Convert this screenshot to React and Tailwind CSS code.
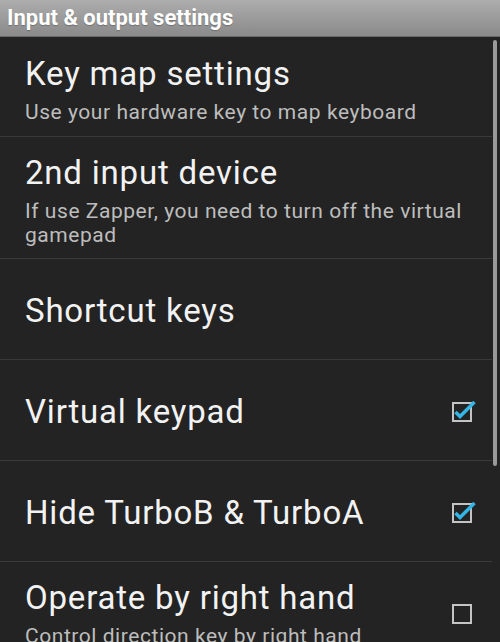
const items = [
  { title: 'Key map settings', summary: 'Use your hardware key to map keyboard', pt: 'pt-[18px]', pb: 'pb-[12px]' },
  { title: '2nd input device', summary: 'If use Zapper, you need to turn off the virtual gamepad', pt: 'pt-[17px]', pb: 'pb-[11px]' },
  { title: 'Shortcut keys', pt: 'pt-[33px]', pb: 'pb-[29px]' },
  { title: 'Virtual keypad', checked: true, pt: 'pt-[33px]', pb: 'pb-[29px]' },
  { title: 'Hide TurboB & TurboA', checked: true, pt: 'pt-[33px]', pb: 'pb-[29px]' },
  { title: 'Operate by right hand', summary: 'Control direction key by right hand', checked: false, pt: 'pt-[17px]', pb: 'pb-[12px]' },
];

function CheckBox({ checked }) {
  return (
    <svg width="28" height="28" viewBox="0 0 28 28" className="shrink-0">
      <rect x="3" y="5" width="18" height="18" fill="none" stroke="#c4c4c4" strokeWidth="2" />
      {checked && (
        <path d="M5.5 14 L10 18.5 L24.5 4" fill="none" stroke="#33b5e5" strokeWidth="3.5" strokeLinejoin="miter" />
      )}
    </svg>
  );
}

function Row({ item }) {
  return (
    <div className={`flex items-center pl-[25px] pr-[14px] border-b border-[#3a3a3a] ${item.pt} ${item.pb}`}>
      <div className="flex-1 min-w-0">
        <div className="text-[33px] leading-[38px] tracking-[0.8px] text-[#f2f2f2] whitespace-nowrap">{item.title}</div>
        {item.summary && (
          <div className="mt-[7px] text-[21px] leading-[24px] tracking-[0.55px] text-[#bdbdbd] pr-[4px]">{item.summary}</div>
        )}
      </div>
      {item.checked !== undefined && <CheckBox checked={item.checked} />}
    </div>
  );
}

export default function App() {
  return (
    <div className="w-[500px] h-[642px] overflow-hidden bg-[#232323] flex flex-col" style={{ fontFamily: 'Roboto, "Noto Sans", sans-serif' }}>
      <div className="h-[37px] shrink-0 flex items-center px-[7px] bg-gradient-to-b from-[#adadad] to-[#8a8a8a] border-b border-[#6a6a6a]">
        <span className="text-[22px] font-bold text-white leading-none [text-shadow:0_1px_1px_rgba(0,0,0,0.25)]">Input &amp; output settings</span>
      </div>
      <div className="flex flex-1 min-h-0">
        <div className="w-[492px] shrink-0">
          {items.map((item) => (
            <Row key={item.title} item={item} />
          ))}
        </div>
        <div className="flex-1 pt-[3px] pl-[1px]">
          <div className="w-[4px] h-[426px] rounded-full bg-[#9a9a9a]"></div>
        </div>
      </div>
    </div>
  );
}
